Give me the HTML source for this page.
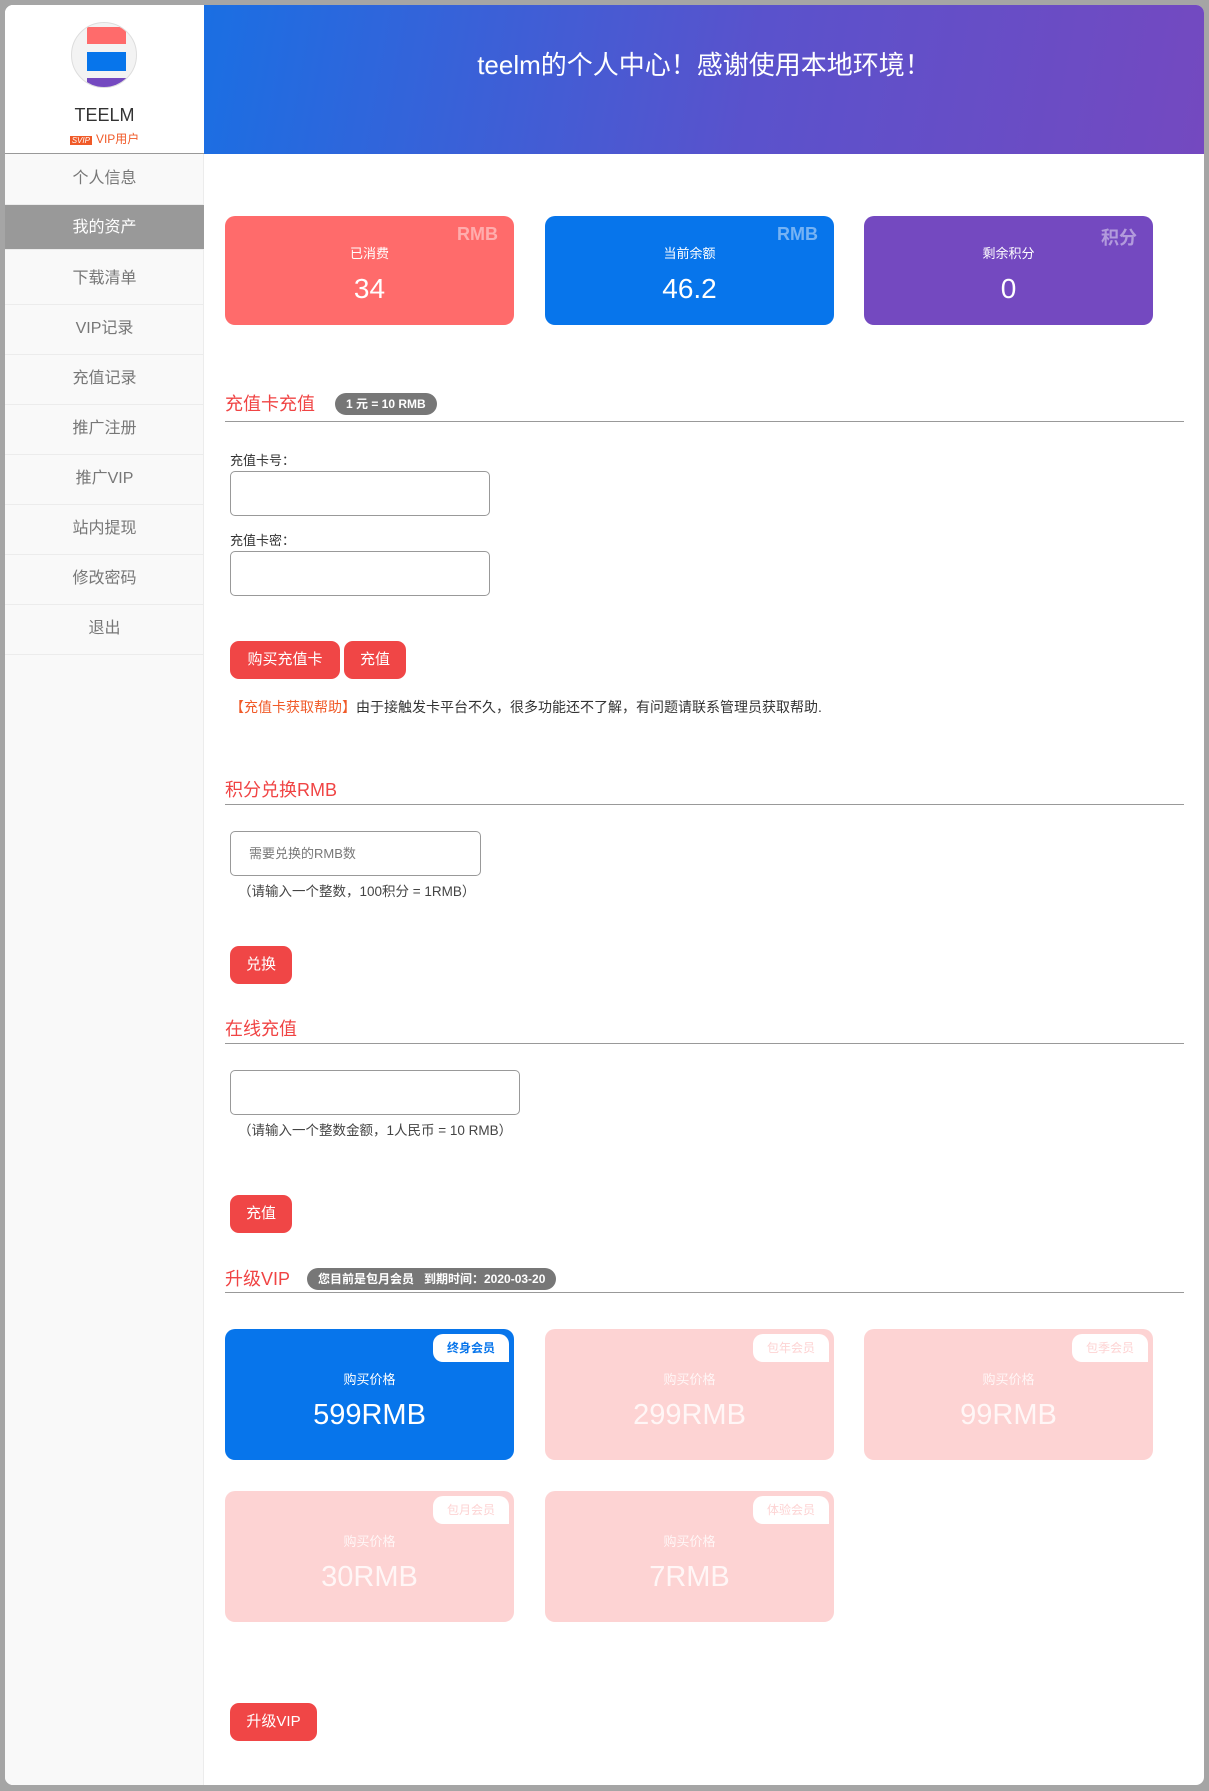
<!DOCTYPE html>
<html><head><meta charset="utf-8">
<style>
*{margin:0;padding:0;box-sizing:border-box}
body{width:1209px;height:1791px;background:#a5a5a5;font-family:"Liberation Sans","Noto Sans CJK SC",sans-serif;position:relative;overflow:hidden}
.a{position:absolute}
#wrap{left:5px;top:5px;width:1199px;height:1780px;background:#fff;border-radius:8px;overflow:hidden}
#side{left:0;top:0;width:199px;height:1780px;background:#f9f9f9;border-right:1px solid #ececec}
#prof{left:0;top:0;width:199px;height:149px;background:#fff;border-bottom:1px solid #999}
#banner{left:199px;top:0;width:1000px;height:149px;background:linear-gradient(100deg,#1a6fe3 0%,#5a52cc 55%,#7449c0 100%);color:#fff;font-size:26px;text-align:center;line-height:120px}
.mi{position:absolute;left:0;width:199px;height:50px;line-height:48px;text-align:center;font-size:16px;color:#777;border-bottom:1px solid #ececec}
.mi.on{background:#999;color:#fff}
.card{position:absolute;width:289px;height:109px;border-radius:10px;color:#fff;text-align:center}
.card .t{position:absolute;right:16px;top:8px;font-size:18px;font-weight:bold;color:rgba(255,255,255,.45)}
.card .l{position:absolute;left:0;right:0;top:27px;font-size:13px}
.card .n{position:absolute;left:0;right:0;top:57px;font-size:28px}
.h{position:absolute;left:220px;font-size:18px;color:#f04444}
.line{position:absolute;left:220px;width:959px;height:1px;background:#999}
.badge{position:absolute;background:#777;color:#fff;font-size:12px;font-weight:bold;border-radius:11px;height:22px;line-height:22px;padding:0 11px}
.lab{position:absolute;left:225px;font-size:13px;color:#333}
.inp{position:absolute;left:225px;border:1px solid #999;border-radius:5px;background:#fff}
.btn{position:absolute;height:38px;line-height:38px;background:#f04646;color:#fff;font-size:15px;border-radius:9px;text-align:center}
.hint{position:absolute;left:233px;font-size:13.5px;color:#444}
.vc{position:absolute;width:289px;height:131px;border-radius:10px;background:#fdd3d3;color:rgba(255,255,255,.8);text-align:center}
.vc.on{background:#0775eb;color:#fff}
.vc .tg{position:absolute;right:5px;top:5px;width:76px;height:28px;line-height:28px;background:#fff;border-radius:10px 10px 0 10px;font-size:12px;color:#fdd3d3}
.vc.on .tg{color:#0775eb;font-weight:bold}
.vc .l{position:absolute;left:0;right:0;top:40px;font-size:13px}
.vc .n{position:absolute;left:0;right:0;top:70px;font-size:29px}
</style></head><body>
<div id="wrap" class="a">
<div id="side" class="a">
 <div id="prof" class="a">
  <div class="a" style="left:66px;top:17px;width:66px;height:66px;border-radius:50%;overflow:hidden;background:#f3f3f3;border:1px solid #ddd">
   <div class="a" style="left:15px;top:4px;width:39px;height:17px;background:#ff6b6b"></div>
   <div class="a" style="left:15px;top:29px;width:39px;height:19px;background:#0775eb"></div>
   <div class="a" style="left:15px;top:55px;width:39px;height:12px;background:#7449c0"></div>
  </div>
  <div class="a" style="left:0;width:199px;top:100px;text-align:center;font-size:18px;color:#333">TEELM</div>
  <div class="a" style="left:0;width:199px;top:125px;text-align:center;font-size:12px;color:#f05a28"><span style="background:#f05a28;color:#fff;font-size:8px;font-style:italic;padding:0 2px;margin-right:4px">SVIP</span>VIP用户</div>
 </div>
 <div class="mi" style="top:150px">个人信息</div>
 <div class="mi on" style="top:200px;height:45px;line-height:45px">我的资产</div>
 <div class="mi" style="top:250px">下载清单</div>
 <div class="mi" style="top:300px">VIP记录</div>
 <div class="mi" style="top:350px">充值记录</div>
 <div class="mi" style="top:400px">推广注册</div>
 <div class="mi" style="top:450px">推广VIP</div>
 <div class="mi" style="top:500px">站内提现</div>
 <div class="mi" style="top:550px">修改密码</div>
 <div class="mi" style="top:600px">退出</div>
</div>
<div id="banner" class="a">teelm的个人中心！感谢使用本地环境！</div>

<div class="card" style="left:220px;top:211px;background:#ff6b6b"><div class="t">RMB</div><div class="l">已消费</div><div class="n">34</div></div>
<div class="card" style="left:540px;top:211px;background:#0775eb"><div class="t">RMB</div><div class="l">当前余额</div><div class="n">46.2</div></div>
<div class="card" style="left:859px;top:211px;background:#7449c0"><div class="t">积分</div><div class="l">剩余积分</div><div class="n">0</div></div>

<div class="h" style="top:385px">充值卡充值</div>
<div class="badge" style="left:330px;top:388px">1 元 = 10 RMB</div>
<div class="line" style="top:416px"></div>
<div class="lab" style="top:445px">充值卡号：</div>
<div class="inp" style="top:466px;width:260px;height:45px"></div>
<div class="lab" style="top:525px">充值卡密：</div>
<div class="inp" style="top:546px;width:260px;height:45px"></div>
<div class="btn" style="left:225px;top:636px;width:110px">购买充值卡</div>
<div class="btn" style="left:339px;top:636px;width:62px">充值</div>
<div class="lab" style="top:692px;left:225px;font-size:14px"><span style="color:#f05a28">【充值卡获取帮助】</span>由于接触发卡平台不久，很多功能还不了解，有问题请联系管理员获取帮助.</div>

<div class="h" style="top:771px">积分兑换RMB</div>
<div class="line" style="top:799px"></div>
<div class="inp" style="top:826px;width:251px;height:45px;font-size:13px;color:#777;line-height:43px;padding-left:18px">需要兑换的RMB数</div>
<div class="hint" style="top:875px">（请输入一个整数，100积分 = 1RMB）</div>
<div class="btn" style="left:225px;top:941px;width:62px">兑换</div>

<div class="h" style="top:1010px">在线充值</div>
<div class="line" style="top:1038px"></div>
<div class="inp" style="top:1065px;width:290px;height:45px"></div>
<div class="hint" style="top:1114px">（请输入一个整数金额，1人民币 = 10 RMB）</div>
<div class="btn" style="left:225px;top:1190px;width:62px">充值</div>

<div class="h" style="top:1260px">升级VIP</div>
<div class="badge" style="left:302px;top:1263px">您目前是包月会员&nbsp;&nbsp;&nbsp;到期时间：2020-03-20</div>
<div class="line" style="top:1287px"></div>

<div class="vc on" style="left:220px;top:1324px"><div class="tg">终身会员</div><div class="l">购买价格</div><div class="n">599RMB</div></div>
<div class="vc" style="left:540px;top:1324px"><div class="tg">包年会员</div><div class="l">购买价格</div><div class="n">299RMB</div></div>
<div class="vc" style="left:859px;top:1324px"><div class="tg">包季会员</div><div class="l">购买价格</div><div class="n">99RMB</div></div>
<div class="vc" style="left:220px;top:1486px"><div class="tg">包月会员</div><div class="l">购买价格</div><div class="n">30RMB</div></div>
<div class="vc" style="left:540px;top:1486px"><div class="tg">体验会员</div><div class="l">购买价格</div><div class="n">7RMB</div></div>

<div class="btn" style="left:225px;top:1698px;width:87px">升级VIP</div>
</div>
</body></html>
